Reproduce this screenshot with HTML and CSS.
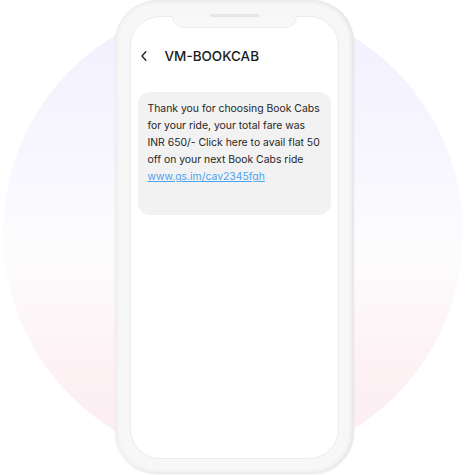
FILE: index.html
```
<!DOCTYPE html>
<html lang="en">
<head>
    <meta charset="UTF-8">
    <meta name="viewport" content="width=device-width, initial-scale=1.0">
    <title>VM-BOOKCAB</title>
    <link rel="stylesheet" href="styles.css">
</head>
<body>

<div class="stage">
    <div class="phone">
        <div class="notch"><span class="speaker"></span></div>
        <div class="screen">
            <div class="header">
                <svg class="back" width="8" height="12" viewBox="0 0 8 12">
                    <path d="M5.8 1.8 L2 6 L5.8 10.2" fill="none" stroke="#222" stroke-width="1.4" stroke-linecap="round" stroke-linejoin="round"/>
                </svg>
                <span class="sender">VM-BOOKCAB</span>
            </div>
            <div class="bubble">
                <p>Thank you for choosing Book Cabs<br>
                for your ride, your total fare was<br>
                INR 650/- Click here to avail flat 50<br>
                off on your next Book Cabs ride</p>
                <a href="#">www.gs.im/cav2345fgh</a>
            </div>
        </div>
    </div>
</div>

</body>
</html>
```

FILE: styles.css
```
body {
    margin: 0;
    font-family: Inter, "Noto Sans", sans-serif;
    background-color: #ffffff;
}
.stage {
    position: relative;
    width: 467px;
    height: 475px;
    display: flex;
    justify-content: center;
    overflow: hidden;
}
.stage::before {
    content: "";
    position: absolute;
    left: 3px;
    top: 3px;
    width: 460px;
    height: 460px;
    border-radius: 50%;
    background: linear-gradient(180deg, #f1effe 0%, #f8f7fe 35%, #fdfcfd 55%, #fdf1f4 80%, #fcedf1 100%);
}
.phone {
    position: relative;
    margin-left: 1px;
    width: 209px;
    height: 443px;
    padding: 16px 15px 15px;
    border-radius: 42px;
    background-color: #f7f7f7;
    box-shadow: inset 0 0 6px rgba(0, 0, 0, 0.08), inset -3px 0 4px rgba(0, 0, 0, 0.04), 0 1px 3px rgba(0, 0, 0, 0.05);
}
.screen {
    height: 100%;
    box-sizing: border-box;
    border: 1px solid #ececec;
    border-radius: 30px;
    background-color: #ffffff;
    padding: 24px 7px 0;
}
.notch {
    position: absolute;
    left: 57px;
    top: 16px;
    width: 125px;
    height: 12px;
    background-color: #f8f8f8;
    border-radius: 0 0 12px 12px;
    border: 1px solid #eeeeee;
    border-top: none;
    box-sizing: border-box;
    display: flex;
    justify-content: center;
}
.speaker {
    width: 49px;
    height: 3px;
    margin-top: -2px;
    border-radius: 2px;
    background-color: #e6e6e6;
}
.header {
    display: flex;
    align-items: center;
    height: 30px;
    padding-left: 2px;
}
.back {
    margin-right: 17px;
}
.sender {
    font-size: 13.5px;
    font-weight: 500;
    letter-spacing: 0;
    color: #1c1c1c;
}
.bubble {
    margin-top: 21px;
    height: 123px;
    box-sizing: border-box;
    padding: 8px 10px;
    border-radius: 12px;
    background-color: #f2f2f2;
    font-size: 10.4px;
    line-height: 17px;
    color: #262626;
    white-space: nowrap;
}
.bubble p {
    margin: 0;
}
.bubble a {
    color: #4da3ee;
    text-decoration: underline;
}
```
